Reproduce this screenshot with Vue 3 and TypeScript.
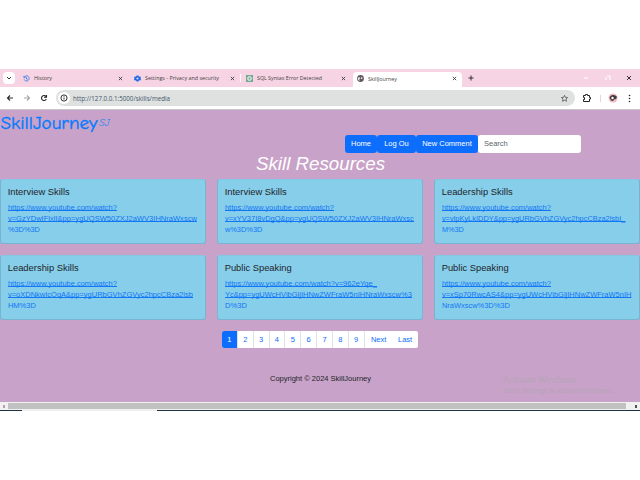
<script setup lang="ts">
interface Tab { title: string; icon: string; width: number; active?: boolean }
interface Line { text: string; width: number }
interface Resource { title: string; titleWidth: number; lines: Line[] }

const tabs: Tab[] = [
  { title: 'History', icon: 'history', width: 111 },
  { title: 'Settings - Privacy and security', icon: 'gear', width: 112 },
  { title: 'SQL Syntax Error Detected', icon: 'chat', width: 111 },
  { title: 'SkillJourney', icon: 'globe', width: 109, active: true },
]
const tabTextWidths = [18, 74, 65, 29]

const resources: Resource[] = [
  { title: 'Interview Skills', titleWidth: 62, lines: [
    { text: 'https://www.youtube.com/watch?', width: 109 },
    { text: 'v=GzYDwIFlxlI&pp=ygUQSW50ZXJ2aWV3IHNraWxscw', width: 189 },
    { text: '%3D%3D', width: 32 } ] },
  { title: 'Interview Skills', titleWidth: 62, lines: [
    { text: 'https://www.youtube.com/watch?', width: 109 },
    { text: 'v=xYV37I8vDgQ&pp=ygUQSW50ZXJ2aWV3IHNraWxsc', width: 189 },
    { text: 'w%3D%3D', width: 37.5 } ] },
  { title: 'Leadership Skills', titleWidth: 71, lines: [
    { text: 'https://www.youtube.com/watch?', width: 109 },
    { text: 'v=vlpKyLkIDDY&pp=ygURbGVhZGVyc2hpcCBza2lsbI_', width: 183.5 },
    { text: 'M%3D', width: 22 } ] },
  { title: 'Leadership Skills', titleWidth: 71, lines: [
    { text: 'https://www.youtube.com/watch?', width: 109 },
    { text: 'v=oXDNkwIcOqA&pp=ygURbGVhZGVyc2hpcCBza2lsb', width: 185 },
    { text: 'HM%3D', width: 28 } ] },
  { title: 'Public Speaking', titleWidth: 67, lines: [
    { text: 'https://www.youtube.com/watch?v=962eYqe_', width: 152 },
    { text: 'Yc&pp=ygUWcHVibGljIHNwZWFraW5nIHNraWxscw%3', width: 187 },
    { text: 'D%3D', width: 22 } ] },
  { title: 'Public Speaking', titleWidth: 67, lines: [
    { text: 'https://www.youtube.com/watch?', width: 109 },
    { text: 'v=xSp70RwcAS4&pp=ygUWcHVibGljIHNwZWFraW5nIH', width: 189.5 },
    { text: 'NraWxscw%3D%3D', width: 68 } ] },
]
const pages = ['1', '2', '3', '4', '5', '6', '7', '8', '9']
</script>

<template>
  <div class="screen">
    <header class="tabs">
      <span class="chevron"><svg viewBox="0 0 12 12"><path d="M4 5l2 2 2-2" /></svg></span>
      <div v-for="(tab, i) in tabs" :key="tab.title" class="tab" :class="{ active: tab.active, divided: i === 2 }" :style="{ width: tab.width + 'px' }">
        <svg class="favicon" viewBox="0 0 16 16">
          <g v-if="tab.icon === 'history'" fill="none" stroke="#2f73e8" stroke-width="1.8"><path d="M3 4.5A6 6 0 1 1 2.5 10M2 2v4h4M8 5v4l3 1" /></g>
          <g v-else-if="tab.icon === 'gear'"><path fill="#1769e8" d="M6 1h4l.6 2 1.8 1 2-.4 1.6 3L14.500 8l1.500 1.500-1.600 3-2-.5-1.800 1L10 15H6l-.6-2-1.800-1-2 .5-1.600-3L1.500 8 0 6.600l1.600-3 2 .4 1.800-1z" /><circle cx="8" cy="8" r="2.500" fill="#f6d4e3" /></g>
          <g v-else-if="tab.icon === 'chat'"><rect width="16" height="16" fill="#75a68f" /><g fill="none" stroke="#edf6f1" stroke-width="1.1"><ellipse cx="8" cy="8" rx="5.500" ry="3" /><ellipse cx="8" cy="8" rx="5.500" ry="3" transform="rotate(60 8 8)" /><ellipse cx="8" cy="8" rx="5.500" ry="3" transform="rotate(120 8 8)" /></g></g>
          <g v-else><circle cx="8" cy="8" r="7.800" fill="#625960" /><path fill="#fff" d="M2 6l4-1 1 2-2 2 1 3-1 1-3-4zm8-2l3 3-2 2-3-1 2-2z" /></g>
        </svg>
        <svg class="tab-title" viewBox="0 0 76 10"><text x="0" y="7.300" :textLength="tabTextWidths[i]" lengthAdjust="spacingAndGlyphs">{{ tab.title }}</text></svg>
        <svg class="close" viewBox="0 0 6 6"><path d="M1 1l4 4M5 1L1 5" /></svg>
      </div>
      <svg class="plus" viewBox="0 0 6 6"><path d="M3 .5v5M.5 3h5" /></svg>
      <svg class="window-controls" viewBox="0 0 52 10"><path d="M3 5h4M26 3h3v4M25 4v3" stroke="#fff" /><path d="M46 3l4 4M50 3l-4 4" stroke="#333" /></svg>
    </header>

    <nav class="toolbar">
      <svg class="nav-icons" viewBox="0 0 54 22"><path d="M13 11H7.500m2.500-2.500L7.500 11l2.500 2.500" stroke="#292929" /><path d="M24 11h5.500M27 8.500l2.500 2.500-2.500 2.500" stroke="#aaa2a8" /><path d="M46 9.500a2.500 2.500 0 1 0 .3 2.600M46.500 8v2.300H44" stroke="#292929" /></svg>
      <div class="address">
        <span class="site-info"><svg viewBox="0 0 12 12"><circle cx="6" cy="6" r="3.100" /><path d="M6 5.500v2M6 4v.7" /></svg></span>
        <svg class="url" viewBox="0 0 100 12"><text x="0" y="8.500" textLength="97" lengthAdjust="spacingAndGlyphs">http://127.0.0.1:5000/skills/media</text></svg>
        <svg class="star" viewBox="0 0 10 10"><path d="M5 1.500l1 2.200 2.500.2-1.900 1.700.6 2.500L5 6.900 2.800 8.100l.6-2.500L1.500 3.900 4 3.700z" /></svg>
      </div>
      <svg class="tool-icons" viewBox="0 0 62 22"><path d="M8.500 8.500h2v-1h2v1h2v2h1v1.500h-1v2.500h-6v-2h1v-2h-1z" fill="none" stroke="#222" /><path d="M25.500 8v7" stroke="#f5cadc" /><circle cx="38" cy="11" r="4.500" fill="#f1b9c0" /><path d="M34.500 10.500q1-3 4-2.500t3.500 2l-1 2-2 .5-1 1.500-2-.5z" fill="#443b43" /><circle cx="37.500" cy="11" r="1.200" fill="#fff" /><g fill="#242424"><circle cx="54.500" cy="8.500" r=".8" /><circle cx="54.500" cy="11.500" r=".8" /><circle cx="54.500" cy="14.500" r=".8" /></g></svg>
    </nav>

    <main>
      <div class="brand">
        <svg viewBox="0 0 120 28"><text class="brand-name" x=".5" y="19" textLength="97" lengthAdjust="spacingAndGlyphs">SkillJourney</text><text class="brand-mark" x="99" y="16" textLength="10.500" lengthAdjust="spacingAndGlyphs">SJ</text></svg>
      </div>
      <div class="actions">
        <button class="home">Home</button><button class="logout">Log Ou</button><button class="comment">New Comment</button>
        <input placeholder="Search" aria-label="Search">
      </div>
      <h1><svg viewBox="0 0 130 26"><text x="0" y="17" textLength="129" lengthAdjust="spacingAndGlyphs">Skill Resources</text></svg></h1>
      <section class="cards">
        <article v-for="(item, i) in resources" :key="i" class="card">
          <svg viewBox="0 0 198 63">
            <text class="card-title" x="6.700" y="15.200" :textLength="item.titleWidth" lengthAdjust="spacingAndGlyphs">{{ item.title }}</text>
            <g v-for="(line, n) in item.lines" :key="n" class="link">
              <text x="6.900" :y="29.700 + n * 11" :textLength="line.width" lengthAdjust="spacingAndGlyphs">{{ line.text }}</text>
              <rect v-if="n < 2" x="7" :y="30 + n * 11" :width="line.width" height="1" />
            </g>
          </svg>
        </article>
      </section>
      <div class="pagination"><span v-for="page in pages" :key="page" :class="{ selected: page === '1' }">{{ page }}</span><span class="next">Next</span><span class="last">Last</span></div>
      <footer><svg viewBox="0 0 102 12"><text x="0" y="8.200" textLength="101" lengthAdjust="spacingAndGlyphs">Copyright © 2024 SkillJourney</text></svg></footer>
      <svg class="watermark" viewBox="0 0 120 25"><text class="activate" x="0" y="8.500" textLength="73" lengthAdjust="spacingAndGlyphs">Activate Windows</text><text x="0" y="18.500" textLength="110" lengthAdjust="spacingAndGlyphs">Go to Settings to activate Windows.</text></svg>
    </main>
    <div class="scrollbar"><span class="arrow left"></span><div class="thumb"></div><span class="arrow"></span></div>
    <div class="taskbar"><span></span></div>
  </div>
</template>

<style>
body { background: #fff; overflow: hidden; }
</style>

<style scoped>
* { box-sizing: border-box; }
.screen { width: 640px; height: 480px; padding-top: 69px; overflow: hidden; background: #fff; font-family: "Liberation Sans", Arial, sans-serif; }
svg { display: block; flex-shrink: 0; overflow: visible; }
.tabs { display: flex; align-items: center; height: 18px; background: #f6d4e3; }
.chevron { width: 12px; height: 12px; margin: 0 4px 0 3px; border-radius: 4px; background: #fff; }
.chevron path, .close path, .plus path { fill: none; stroke: #333; stroke-width: 1; }
.tab { display: flex; align-items: center; height: 18px; padding-left: 4px; }
.tab.active { height: 15px; padding-left: 4px; margin-top: 3px; padding-bottom: 2px; border-radius: 4px 4px 0 0; background: #fff; }
.favicon { width: 7px; height: 7px; margin-right: 4px; }
.tab-title { width: 76px; height: 10px; }
.tab-title text { font: 6px "Open Sans", sans-serif; fill: #443f43; }
.close { width: 5px; height: 5px; margin-left: auto; margin-right: 7.500px; }
.active .close { margin-right: 5px; }
.divided { position: relative; padding-left: 4px; }
.divided::before { content: ""; position: absolute; left: -2px; top: 5px; width: 1px; height: 8px; background: #fff; }
.plus { width: 6px; height: 6px; margin-left: 6px; }
.window-controls { width: 52px; height: 10px; margin-left: auto; margin-right: 7px; fill: none; }
.toolbar { display: flex; align-items: center; height: 23px; background: #fff; border-bottom: 1px solid #c9c7c9; }
.nav-icons { width: 54px; height: 22px; fill: none; stroke-width: 1.1; }
.address { display: flex; align-items: center; width: 519px; height: 16px; margin-left: 2px; border-radius: 8px; background: #dfe1e0; }
.site-info { width: 12px; height: 12px; margin-left: 2px; border-radius: 50%; background: #fff; }
.site-info svg { width: 12px; height: 12px; fill: none; stroke: #333; stroke-width: 1; }
.url { width: 100px; height: 12px; margin-left: 3px; }
.url text { font: 6.800px "Open Sans", sans-serif; fill: #42576a; }
.star { width: 9px; height: 9px; margin-left: auto; margin-right: 6px; fill: none; stroke: #5e6263; }
.tool-icons { width: 62px; height: 22px; }
main { position: relative; height: 292px; background: #c8a2c8; }
.brand { height: 25px; }
.brand svg { width: 120px; height: 28px; }
.brand-name { font: 18.500px "Comic Sans MS", "Comic Neue", "DejaVu Sans", sans-serif; fill: #007bff; stroke: #007bff; stroke-width: .35px; }
.brand-mark { font: italic 9px "Comic Sans MS", "Comic Neue", "DejaVu Sans", sans-serif; fill: #2086f8; }
.actions { display: flex; height: 18px; padding-left: 345px; }
button, input { height: 18px; padding: 0 0 1px; border: 0; border-radius: 3px; font: 7.500px "Liberation Sans", Arial, sans-serif; }
button { color: #fff; background: #0d6efd; }
.home { width: 32px; } .logout { width: 39px; } .comment { width: 62px; }
input { width: 103px; padding-left: 6px; background: #fff; }
input::placeholder { color: #5c6570; opacity: 1; }
h1 { height: 26px; margin: 0; padding-left: 256px; font-weight: 400; }
h1 svg { width: 130px; height: 26px; font-size: 19px; font-style: italic; fill: #fff; }
.cards { display: grid; grid-template-columns: repeat(3, 206px); grid-auto-rows: 65px; column-gap: 11px; row-gap: 11px; }
.card { border: 1px solid #77b4d0; border-top-color: #83c8e3; border-radius: 3px; background: #87ceeb; }
.card svg { width: 198px; height: 63px; }
.card-title { font-size: 9.350px; fill: #212529; }
.link { font-size: 7.500px; fill: #1177f5; }
.pagination { display: flex; width: 196px; height: 17px; margin: 11px 0 0 222px; border-radius: 2px; overflow: hidden; background: #fff; }
.pagination span { width: 15.850px; border-right: 1px solid #dee2e6; color: #0d6efd; font-size: 7.500px; line-height: 17px; text-align: center; }
.pagination .selected { color: #fff; background: #0d6efd; }
.pagination .next { width: 28px; border: 0; } .pagination .last { width: 25px; border: 0; }
footer { padding: 25px 0 0 269.500px; }
footer svg { width: 102px; height: 12px; font-size: 7.500px; fill: #212529; }
.watermark { position: absolute; left: 503px; top: 264px; width: 120px; height: 25px; font: 6.600px "Open Sans", sans-serif; fill: #b5a5b5; }
.activate { font-size: 8.500px; }
.scrollbar { display: flex; align-items: center; height: 8px; background: #f1f1f1; }
.thumb { width: 618px; height: 6px; background: #c1c1c1; }
.arrow { width: 2px; height: 3px; margin-left: 9px; background: #505050; }
.arrow.left { margin: 0 3px; background: #b69eb4; }
.taskbar { height: 1px; padding-left: 22px; background: #203040; }
.taskbar span { display: block; width: 135px; height: 1px; background: #eee; }
</style>
